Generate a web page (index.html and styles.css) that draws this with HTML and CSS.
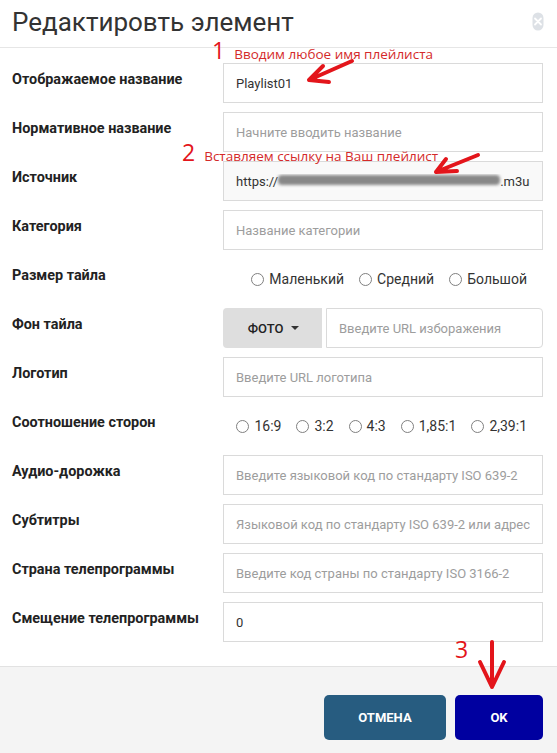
FILE: index.html
```html
<!DOCTYPE html>
<html lang="ru">
<head>
<meta charset="utf-8">
<title>Редактировть элемент</title>
<link rel="stylesheet" href="styles.css">
</head>
<body>
<div class="modal">
  <header class="modal-header">
    <h1 class="title">Редактировть элемент</h1>
    <button class="close" aria-label="Закрыть">
      <svg width="12" height="19" viewBox="0 0 12 19">
        <rect x="0.5" y="0.5" width="11" height="18" rx="5.5" fill="#dde1e6"/>
        <path d="M3 6.5 L9 12.5 M9 6.5 L3 12.5" stroke="#fff" stroke-width="1.8" stroke-linecap="round"/>
      </svg>
    </button>
  </header>

  <div class="modal-body">
    <div class="row">
      <label class="lbl">Отображаемое название</label>
      <input class="field" type="text" value="Playlist01">
    </div>
    <div class="row">
      <label class="lbl">Нормативное название</label>
      <input class="field" type="text" placeholder="Начните вводить название">
    </div>
    <div class="row">
      <label class="lbl">Источник</label>
      <div class="field field-source"><div class="field-inner">https://<span class="redact">d</span><span class="tail">.m3u8</span></div></div>
    </div>
    <div class="row">
      <label class="lbl">Категория</label>
      <input class="field" type="text" placeholder="Название категории">
    </div>
    <div class="row">
      <label class="lbl">Размер тайла</label>
      <div class="radios">
        <span class="opt"><span class="radio"></span>Маленький</span>
        <span class="opt"><span class="radio"></span>Средний</span>
        <span class="opt"><span class="radio"></span>Большой</span>
      </div>
    </div>
    <div class="row">
      <label class="lbl">Фон тайла</label>
      <div class="split">
        <button class="drop">ФОТО <span class="caret"></span></button>
        <input class="field field-right" type="text" placeholder="Введите URL изборажения">
      </div>
    </div>
    <div class="row">
      <label class="lbl">Логотип</label>
      <input class="field" type="text" placeholder="Введите URL логотипа">
    </div>
    <div class="row">
      <label class="lbl">Соотношение сторон</label>
      <div class="radios">
        <span class="opt"><span class="radio"></span>16:9</span>
        <span class="opt"><span class="radio"></span>3:2</span>
        <span class="opt"><span class="radio"></span>4:3</span>
        <span class="opt"><span class="radio"></span>1,85:1</span>
        <span class="opt"><span class="radio"></span>2,39:1</span>
      </div>
    </div>
    <div class="row">
      <label class="lbl">Аудио-дорожка</label>
      <input class="field" type="text" placeholder="Введите языковой код по стандарту ISO 639-2">
    </div>
    <div class="row">
      <label class="lbl">Субтитры</label>
      <input class="field" type="text" placeholder="Языковой код по стандарту ISO 639-2 или адрес">
    </div>
    <div class="row">
      <label class="lbl">Страна телепрограммы</label>
      <input class="field" type="text" placeholder="Введите код страны по стандарту ISO 3166-2">
    </div>
    <div class="row">
      <label class="lbl">Смещение телепрограммы</label>
      <input class="field" type="text" value="0">
    </div>
  </div>

  <footer class="modal-footer">
    <button class="btn btn-cancel">ОТМЕНА</button>
    <button class="btn btn-ok">OK</button>
  </footer>

  <div class="note note-1"><span class="num">1</span>Вводим любое имя плейлиста</div>
  <div class="note note-2"><span class="num">2</span>Вставляем ссылку на Ваш плейлист</div>
  <div class="note note-3"><span class="num">3</span></div>

  <svg class="arrows" width="557" height="753" viewBox="0 0 557 753">
    <g stroke="#e3151b" stroke-width="4" stroke-linecap="round" stroke-linejoin="round" fill="none">
      <path d="M352 61 L309 80 M309 80 L323 66 M309 80 L329 82"/>
      <path d="M478 155 L436 172 M436 172 L446 159 M436 172 L457 171"/>
      <path d="M492 642 L492 687 M480 662 L492 687 L504 662"/>
    </g>
  </svg>
</div>
</body>
</html>
```

FILE: styles.css
```css
html, body {
  margin: 0;
  padding: 0;
  background: #fff;
}

body {
  font-family: Roboto, "Liberation Sans", Arial, sans-serif;
  color: #333;
}

.modal {
  position: relative;
  width: 557px;
  height: 753px;
  overflow: hidden;
  background: #fff;
}

.modal-header {
  height: 47px;
  border-bottom: 1px solid #e6e6e6;
  display: flex;
  align-items: center;
  justify-content: space-between;
  padding: 0 13px 0 12px;
}

.title {
  margin: 0 0 3px;
  font-size: 26px;
  font-weight: 400;
  line-height: 26px;
  color: #333;
}

.close {
  border: 0;
  background: none;
  padding: 0;
  margin-top: -4px;
  display: flex;
}

.modal-body {
  padding: 15px 14px 15px 12px;
}

.row {
  display: grid;
  grid-template-columns: 211px minmax(0, 1fr);
  height: 40px;
  margin-bottom: 9px;
}

.lbl {
  padding-top: 8px;
  font-size: 14.4px;
  line-height: 17px;
  font-weight: 700;
  color: #222;
}

.field {
  box-sizing: border-box;
  height: 40px;
  width: 100%;
  min-width: 0;
  margin: 0;
  border: 1px solid #dadada;
  border-radius: 0;
  padding: 0 12px;
  font-family: Roboto, "Liberation Sans", Arial, sans-serif;
  font-size: 13px;
  color: #333;
  background: #fff;
  outline: none;
}

.field::placeholder {
  color: #9d9d9d;
  opacity: 1;
}

.field-source {
  display: flex;
  align-items: center;
  background: #f9f9f9;
  padding: 0 12px 0 12px;
  overflow: hidden;
}

.field-inner {
  overflow: hidden;
  white-space: nowrap;
  flex: 1;
  min-width: 0;
  font-size: 13px;
  color: #333;
}

.redact {
  display: inline-block;
  width: 222px;
  height: 10px;
  background: #888;
  color: transparent;
  border-radius: 4px;
  filter: blur(1.6px);
  vertical-align: -1px;
  margin-left: 0;
}

.radios {
  display: flex;
  align-items: center;
  justify-content: flex-end;
  gap: 15px;
  padding-right: 16px;
  font-size: 14px;
  color: #333;
}

.opt {
  display: inline-flex;
  align-items: center;
  gap: 5px;
}

.radio {
  display: inline-block;
  width: 11px;
  height: 11px;
  border: 1px solid #808080;
  border-radius: 50%;
  background: #fff;
}

.split {
  display: flex;
  gap: 4px;
}

.drop {
  flex: 0 0 99px;
  height: 40px;
  border: 0;
  border-radius: 4px 0 0 4px;
  background: #dedede;
  font-family: Roboto, "Liberation Sans", Arial, sans-serif;
  font-size: 13px;
  font-weight: 500;
  color: #222;
  display: flex;
  align-items: center;
  justify-content: center;
  gap: 8px;
  padding: 0 0 0 2px;
}

.caret {
  width: 0;
  height: 0;
  border-left: 4px solid transparent;
  border-right: 4px solid transparent;
  border-top: 4px solid #333;
}

.field-right {
  flex: 1;
  border-radius: 0 4px 4px 0;
}

.modal-footer {
  background: #f4f4f4;
  border-top: 1px solid #e2e2e2;
  display: flex;
  justify-content: flex-end;
  gap: 9px;
  padding: 28px 14px 28px;
}

.btn {
  height: 45px;
  border: 0;
  border-radius: 5px;
  color: #fff;
  font-family: Roboto, "Liberation Sans", Arial, sans-serif;
  font-size: 13px;
  font-weight: 700;
}

.btn-cancel {
  width: 122px;
  background: #275c80;
}

.btn-ok {
  width: 88px;
  background: #0000a0;
}

.note {
  position: absolute;
  font-family: "Open Sans", "DejaVu Sans", sans-serif;
  font-size: 13.5px;
  color: #d42a2a;
  display: flex;
  align-items: baseline;
  gap: 9px;
  line-height: 1;
}

.num {
  font-size: 23px;
  color: #e3151b;
}

.note-1 {
  left: 212px;
  top: 39px;
}

.note-2 {
  left: 182px;
  top: 141px;
}

.note-3 {
  left: 455px;
  top: 638px;
}

.arrows {
  position: absolute;
  left: 0;
  top: 0;
  pointer-events: none;
}
```
